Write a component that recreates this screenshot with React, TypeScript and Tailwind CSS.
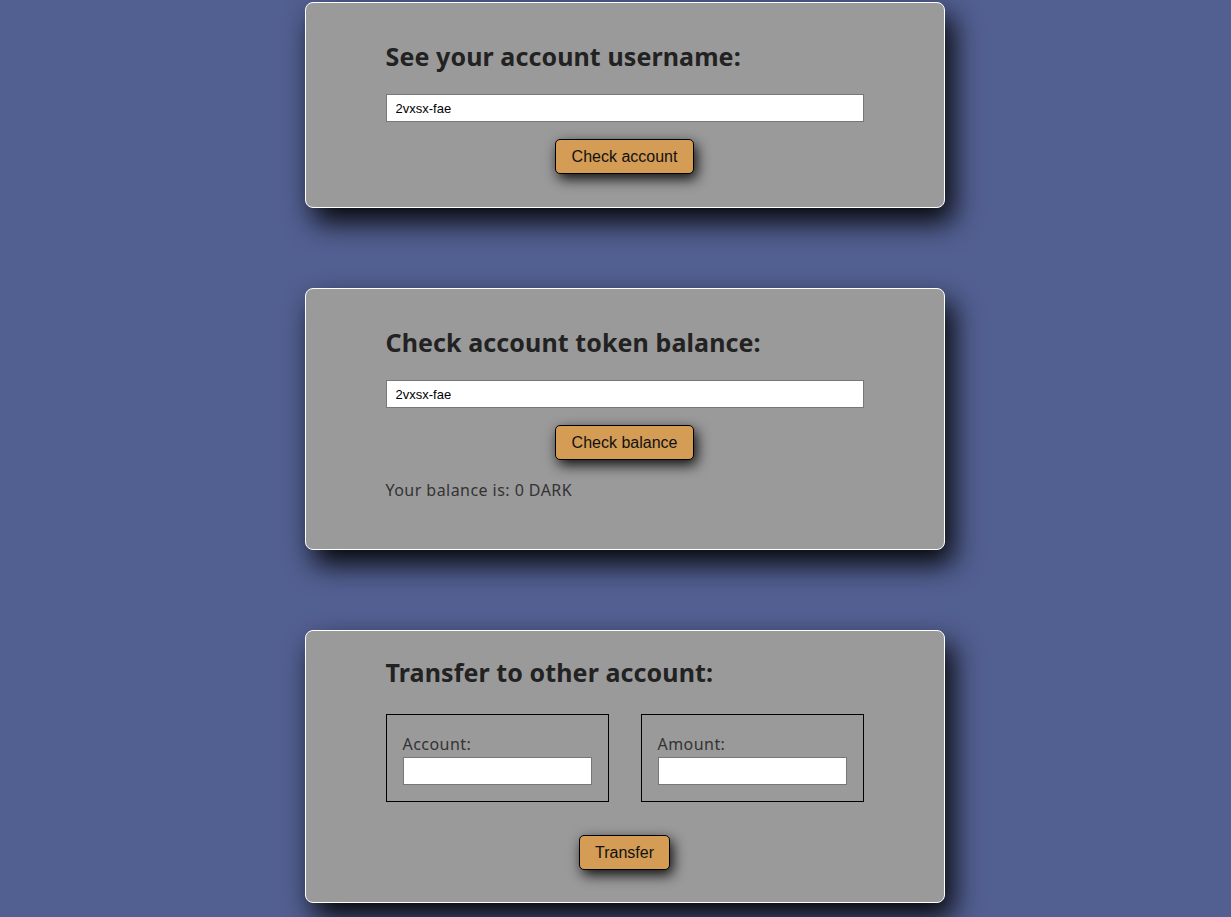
export default function App() {
  const card =
    "w-[640px] rounded-lg border border-white bg-[#9a9a9a] px-[80px] shadow-[8px_14px_28px_rgba(0,0,0,0.95)]";
  const heading =
    "text-[25px] leading-[36px] font-bold text-[#222222] font-['Noto_Sans',sans-serif] tracking-[0.1px]";
  const input =
    "block h-[28px] w-full border border-[#777777] bg-white px-[9px] text-[13px] text-black font-['Liberation_Sans',Arial,sans-serif] outline-none";
  const button =
    "h-[35px] whitespace-nowrap rounded-[5px] border border-black bg-[#d49c54] px-0 text-[16px] text-[#111111] font-['Liberation_Sans',Arial,sans-serif] shadow-[3px_5px_13px_rgba(0,0,0,0.9)]";
  const body =
    "text-[16px] text-[#333333] font-['Noto_Sans',sans-serif] tracking-[0.45px]";

  return (
    <div className="min-h-screen bg-[#525f91] flex flex-col items-center pl-[18px] pt-[2px] pb-10 gap-[80px]">
      <div className={`${card} pt-[35px] pb-[33px]`}>
        <h2 className={heading}>See your account username:</h2>
        <input className={`${input} mt-[20px]`} defaultValue="2vxsx-fae" />
        <div className="mt-[17px] flex justify-center">
          <button className={`${button} w-[139px]`}>Check account</button>
        </div>
      </div>

      <div className={`${card} pt-[35px] pb-[47px]`}>
        <h2 className={heading}>Check account token balance:</h2>
        <input className={`${input} mt-[20px]`} defaultValue="2vxsx-fae" />
        <div className="mt-[17px] flex justify-center">
          <button className={`${button} w-[139px]`}>Check balance</button>
        </div>
        <p className={`${body} leading-[24px] mt-[18px]`}>Your balance is: 0 DARK</p>
      </div>

      <div className={`${card} pt-[23px] pb-[32px]`}>
        <h2 className={heading}>Transfer to other account:</h2>
        <div className="mt-[24px] flex justify-between">
          <div className="w-[223px] border border-black px-[16px] pt-[16px] pb-[16px]">
            <label className={`${body} leading-[26px] block`}>Account:</label>
            <input className={input} />
          </div>
          <div className="w-[223px] border border-black px-[16px] pt-[16px] pb-[16px]">
            <label className={`${body} leading-[26px] block`}>Amount:</label>
            <input className={input} />
          </div>
        </div>
        <div className="mt-[33px] flex justify-center">
          <button className={`${button} w-[91px]`}>Transfer</button>
        </div>
      </div>
    </div>
  );
}
